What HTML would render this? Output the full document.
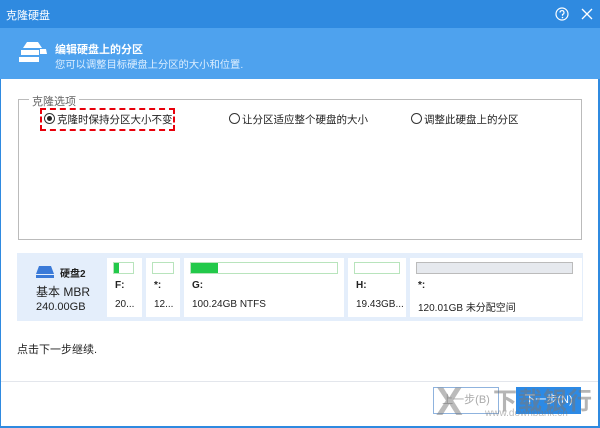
<!DOCTYPE html><html><head><meta charset="utf-8"><style>
*{margin:0;padding:0;box-sizing:border-box}
body{width:600px;height:428px;overflow:hidden;background:#fff;font-family:"Liberation Sans","Noto Sans CJK SC",sans-serif;font-size:11px;color:#222;position:relative}
.a{position:absolute;white-space:nowrap}
.card{position:absolute;top:258px;height:59px;background:#fff}
.bar{position:absolute;top:4px;left:6px;height:12px;border:1px solid #b8e4bc;background:#fff}
.lbl{position:absolute;left:8px;top:22px;font-weight:bold;font-size:10px}
.sz{position:absolute;left:8px;top:41px;font-size:10px;white-space:nowrap}
</style></head><body>
<div class="a" style="left:0;top:0;width:600px;height:28px;background:#2f8ae0"></div>
<div class="a" style="left:6px;top:7px;color:#fff;font-size:11px">克隆硬盘</div>
<svg class="a" style="left:555px;top:7px" width="14" height="14"><circle cx="7" cy="7" r="6" fill="none" stroke="#fff" stroke-width="1.2"/><path d="M5 5.5a2 2 0 1 1 2.5 2v1.2" fill="none" stroke="#fff" stroke-width="1.2"/><circle cx="7.5" cy="10.5" r=".8" fill="#fff"/></svg>
<svg class="a" style="left:581px;top:8px" width="12" height="12"><path d="M1 1L11 11M11 1L1 11" stroke="#fff" stroke-width="1.3"/></svg>
<div class="a" style="left:0;top:28px;width:600px;height:51px;background:#4ea2ee"></div>
<svg class="a" style="left:18px;top:40px" width="30" height="24"><path d="M9 2h11l4 6H5z" fill="#fff"/><path d="M3 10h18v5H3z" fill="#fff"/><path d="M1 17h20v5H1z" fill="#fff"/><path d="M22 9h6l1 5h-7z" fill="#fff"/></svg>
<div class="a" style="left:55px;top:41px;color:#fff;font-weight:bold;font-size:11px">编辑硬盘上的分区</div>
<div class="a" style="left:55px;top:56px;color:#dceeff;font-size:10.3px">您可以调整目标硬盘上分区的大小和位置.</div>
<div class="a" style="left:0;top:79px;width:1px;height:349px;background:#2f8ae0"></div>
<div class="a" style="left:598px;top:79px;width:2px;height:349px;background:#2f8ae0"></div>
<div class="a" style="left:0;top:426px;width:600px;height:2px;background:#2f8ae0"></div>
<div class="a" style="left:18px;top:99px;width:564px;height:141px;border:1px solid #bbb"></div>
<div class="a" style="left:29px;top:93px;background:#fff;padding:0 3px;color:#666">克隆选项</div>
<div class="a" style="left:40px;top:108px;width:135px;height:23px;border:2px dashed #e8000b"></div>
<div class="a" style="left:44px;top:113px;width:11px;height:11px;border:1px solid #333;border-radius:50%"></div>
<div class="a" style="left:47px;top:116px;width:5px;height:5px;background:#222;border-radius:50%"></div>
<div class="a" style="left:57px;top:112px;font-size:10.5px">克隆时保持分区大小不变</div>
<div class="a" style="left:229px;top:113px;width:11px;height:11px;border:1px solid #333;border-radius:50%"></div>
<div class="a" style="left:242px;top:112px;font-size:10.5px">让分区适应整个硬盘的大小</div>
<div class="a" style="left:411px;top:113px;width:11px;height:11px;border:1px solid #333;border-radius:50%"></div>
<div class="a" style="left:424px;top:112px;font-size:10.5px">调整此硬盘上的分区</div>
<div class="a" style="left:17px;top:253px;width:566px;height:68px;background:#e4eefb"></div>
<svg class="a" style="left:36px;top:266px" width="18" height="12"><path d="M3 0h12l3 8H0z" fill="#3a7ad8"/><rect x="0" y="9" width="18" height="3" fill="#3a7ad8"/></svg>
<div class="a" style="left:60px;top:265px;font-weight:bold;font-size:10px">硬盘2</div>
<div class="a" style="left:36px;top:283px;font-size:12px">基本 MBR</div>
<div class="a" style="left:36px;top:301px;font-size:11px">240.00GB</div>
<div class="card" style="left:107px;width:35px"><div class="bar" style="width:21px"><div style="width:5px;height:10px;background:#22c94a"></div></div><div class="lbl">F:</div><div class="sz">20...</div></div>
<div class="card" style="left:146px;width:34px"><div class="bar" style="width:22px"></div><div class="lbl">*:</div><div class="sz">12...</div></div>
<div class="card" style="left:184px;width:160px"><div class="bar" style="width:148px"><div style="width:27px;height:10px;background:#22c94a"></div></div><div class="lbl">G:</div><div class="sz">100.24GB NTFS</div></div>
<div class="card" style="left:348px;width:58px"><div class="bar" style="width:46px"></div><div class="lbl">H:</div><div class="sz">19.43GB...</div></div>
<div class="card" style="left:410px;width:172px"><div class="bar" style="width:157px;height:12px;background:#e6e9ee;border-color:#bbb"></div><div class="lbl">*:</div><div class="sz">120.01GB 未分配空间</div></div>
<div class="a" style="left:17px;top:341px">点击下一步继续.</div>
<div class="a" style="left:1px;top:381px;width:597px;height:1px;background:#e3e6ec"></div>
<div class="a" style="left:433px;top:387px;width:66px;height:27px;border:1px solid #8fb3de;color:#aaa;text-align:center;line-height:25px">上一步(B)</div>
<div class="a" style="left:516px;top:387px;width:65px;height:27px;background:#2c8ae6;color:#fff;text-align:center;line-height:27px">下一步(N)</div>
<div class="a" style="left:493px;top:381px;color:rgba(120,120,120,.55);font-size:24px;font-weight:bold;letter-spacing:1px">下载银行</div>
<div class="a" style="left:485px;top:408px;color:rgba(120,120,120,.5);font-size:10px">www.downbank.cn</div>
<div class="a" style="left:436px;top:380px;color:rgba(120,120,120,.5);font-size:40px;font-weight:bold">X</div>
</body></html>
